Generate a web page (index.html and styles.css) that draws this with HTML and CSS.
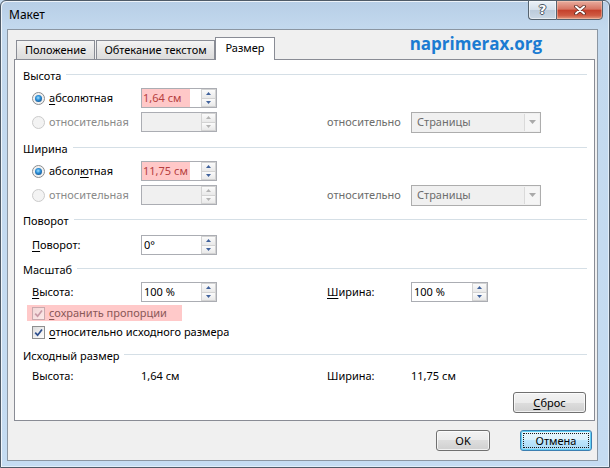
FILE: index.html
```html
<!DOCTYPE html>
<html lang="ru">
<head>
<meta charset="utf-8">
<title>Макет</title>
<link rel="stylesheet" href="styles.css">
</head>
<body>
<div class="window">
  <div class="titlebar">
    <span class="title">Макет</span>
    <div class="caption">
      <span class="cap-btn help">?</span>
      <span class="cap-btn close">
        <svg width="12" height="10" viewBox="0 0 12 10"><path d="M2 1.5 L10 8.5 M10 1.5 L2 8.5" stroke="#5a2a22" stroke-width="3.6" stroke-linecap="round" fill="none"/><path d="M2 1.5 L10 8.5 M10 1.5 L2 8.5" stroke="#ffffff" stroke-width="2" stroke-linecap="round" fill="none"/></svg>
      </span>
    </div>
  </div>

  <div class="client">
    <div class="tabs">
      <div class="tab tab-1">Положение</div>
      <div class="tab tab-2">Обтекание текстом</div>
      <div class="tab active">Размер</div>
      <div class="brand">naprimerax.org</div>
    </div>

    <div class="panel">
      <div class="group-head first"><span>Высота</span><i class="rule"></i></div>
      <div class="row mt2">
        <div class="opt"><span class="radio"><span class="dot"></span></span><span><u>а</u>бсолютная</span></div>
        <div class="spin">
          <span class="val"><span class="hl">1,64 см</span></span>
          <span class="arrows"><span class="up"><svg width="5" height="3" viewBox="0 0 5 3"><path d="M0 3 L2.5 0 L5 3Z" fill="#40629c"/></svg></span><span class="dn"><svg width="5" height="3" viewBox="0 0 5 3"><path d="M0 0 L2.5 3 L5 0Z" fill="#40629c"/></svg></span></span>
        </div>
      </div>
      <div class="row">
        <div class="opt disabled"><span class="radio off"></span><span>относительная</span></div>
        <div class="spin off">
          <span class="val"></span>
          <span class="arrows"><span class="up"><svg width="5" height="3" viewBox="0 0 5 3"><path d="M0 3 L2.5 0 L5 3Z" fill="#b4b4b4"/></svg></span><span class="dn"><svg width="5" height="3" viewBox="0 0 5 3"><path d="M0 0 L2.5 3 L5 0Z" fill="#b4b4b4"/></svg></span></span>
        </div>
        <span class="c4 muted">относительно</span>
        <div class="combo"><span class="txt">Страницы</span><span class="drop"><svg width="7" height="4" viewBox="0 0 7 4"><path d="M0 0 L3.5 4 L7 0Z" fill="#a9a9a9"/></svg></span></div>
      </div>

      <div class="group-head mt7"><span>Ширина</span><i class="rule"></i></div>
      <div class="row mt2">
        <div class="opt"><span class="radio"><span class="dot"></span></span><span>абсол<u>ю</u>тная</span></div>
        <div class="spin">
          <span class="val"><span class="hl">11,75 см</span></span>
          <span class="arrows"><span class="up"><svg width="5" height="3" viewBox="0 0 5 3"><path d="M0 3 L2.5 0 L5 3Z" fill="#40629c"/></svg></span><span class="dn"><svg width="5" height="3" viewBox="0 0 5 3"><path d="M0 0 L2.5 3 L5 0Z" fill="#40629c"/></svg></span></span>
        </div>
      </div>
      <div class="row">
        <div class="opt disabled"><span class="radio off"></span><span>относительная</span></div>
        <div class="spin off">
          <span class="val"></span>
          <span class="arrows"><span class="up"><svg width="5" height="3" viewBox="0 0 5 3"><path d="M0 3 L2.5 0 L5 3Z" fill="#b4b4b4"/></svg></span><span class="dn"><svg width="5" height="3" viewBox="0 0 5 3"><path d="M0 0 L2.5 3 L5 0Z" fill="#b4b4b4"/></svg></span></span>
        </div>
        <span class="c4 muted">относительно</span>
        <div class="combo"><span class="txt">Страницы</span><span class="drop"><svg width="7" height="4" viewBox="0 0 7 4"><path d="M0 0 L3.5 4 L7 0Z" fill="#a9a9a9"/></svg></span></div>
      </div>

      <div class="group-head mt6"><span>Поворот</span><i class="rule"></i></div>
      <div class="row mt4">
        <span><u>П</u>оворот:</span>
        <div class="spin">
          <span class="val plain">0°</span>
          <span class="arrows"><span class="up"><svg width="5" height="3" viewBox="0 0 5 3"><path d="M0 3 L2.5 0 L5 3Z" fill="#40629c"/></svg></span><span class="dn"><svg width="5" height="3" viewBox="0 0 5 3"><path d="M0 0 L2.5 3 L5 0Z" fill="#40629c"/></svg></span></span>
        </div>
      </div>

      <div class="group-head mt5"><span>Масштаб</span><i class="rule"></i></div>
      <div class="row mt2">
        <span><u>В</u>ысота:</span>
        <div class="spin">
          <span class="val plain">100 %</span>
          <span class="arrows"><span class="up"><svg width="5" height="3" viewBox="0 0 5 3"><path d="M0 3 L2.5 0 L5 3Z" fill="#40629c"/></svg></span><span class="dn"><svg width="5" height="3" viewBox="0 0 5 3"><path d="M0 0 L2.5 3 L5 0Z" fill="#40629c"/></svg></span></span>
        </div>
        <span class="c4"><u>Ш</u>ирина:</span>
        <div class="spin wide">
          <span class="val plain">100 %</span>
          <span class="arrows"><span class="up"><svg width="5" height="3" viewBox="0 0 5 3"><path d="M0 3 L2.5 0 L5 3Z" fill="#40629c"/></svg></span><span class="dn"><svg width="5" height="3" viewBox="0 0 5 3"><path d="M0 0 L2.5 3 L5 0Z" fill="#40629c"/></svg></span></span>
        </div>
      </div>
      <div class="check-row">
        <div class="chk marked">
          <span class="box soft"><svg width="9" height="9" viewBox="0 0 9 9"><path d="M1.2 4.6 L3.6 7.2 L8 1.4" stroke="#c99aa6" stroke-width="1.7" fill="none"/></svg></span>
          <span><u>с</u>охранить пропорции</span>
        </div>
      </div>
      <div class="check-row mt1">
        <div class="chk">
          <span class="box"><svg width="9" height="9" viewBox="0 0 9 9"><path d="M1.2 4.6 L3.6 7.2 L8 1.4" stroke="#2d4f8e" stroke-width="1.7" fill="none"/></svg></span>
          <span><u>о</u>тносительно исходного размера</span>
        </div>
      </div>

      <div class="group-head mt7"><span>Исходный размер</span><i class="rule"></i></div>
      <div class="row info mt4">
        <span>Высота:</span>
        <span>1,64 см</span>
        <span class="c4">Ширина:</span>
        <span>11,75 см</span>
      </div>

      <div class="reset-row">
        <button class="btn reset"><span class="face"><u>С</u>брос</span></button>
      </div>
    </div>

    <div class="actions">
      <button class="btn ok"><span class="face">OK</span></button>
      <button class="btn cancel default"><span class="face">Отмена</span></button>
    </div>
  </div>
</div>
</body>
</html>
```
FILE: styles.css
```css
html, body {
  margin: 0;
  padding: 0;
}
body {
  width: 610px;
  height: 468px;
  overflow: hidden;
  background: #c6dcf1;
  font-family: "Noto Sans", "Liberation Sans", sans-serif;
  font-size: 11px;
  line-height: 16px;
  color: #000;
}
u {
  text-decoration: underline;
  text-underline-offset: 2px;
}

.window {
  box-sizing: border-box;
  width: 610px;
  height: 468px;
  border: 1px solid #4f5b68;
  border-radius: 6px 6px 0 0;
  background: linear-gradient(180deg, #b7cee6 0, #c3d9ee 28px, #c5dcf2 100%);
  box-shadow: inset 1px 1px 0 rgba(255,255,255,0.75), inset -1px -1px 0 rgba(255,255,255,0.5);
  display: flex;
  flex-direction: column;
}

/* title bar */
.titlebar {
  height: 28px;
  display: flex;
  align-items: flex-start;
}
.title {
  padding: 6px 0 0 8px;
  font-size: 12px;
  line-height: 16px;
  color: #000;
}
.caption {
  margin-left: auto;
  margin-right: 6px;
  margin-top: -1px;
  display: flex;
}
.cap-btn {
  box-sizing: border-box;
  height: 20px;
  border: 1px solid #56636f;
  display: flex;
  align-items: center;
  justify-content: center;
}
.help {
  width: 28px;
  border-right: 0;
  border-radius: 0 0 0 4px;
  background: linear-gradient(180deg, #eaf1f8 0, #d5e0eb 48%, #bccbdb 52%, #cbd8e5 100%);
  box-shadow: inset 0 0 0 1px rgba(255,255,255,0.5);
  color: #fff;
  font-family: "DejaVu Sans", sans-serif;
  font-weight: 700;
  font-size: 13px;
  text-shadow: 1px 0 0 #4a5563, -1px 0 0 #4a5563, 0 1px 0 #4a5563, 0 -1px 0 #4a5563;
}
.close {
  width: 47px;
  border-radius: 0 0 4px 0;
  background: linear-gradient(180deg, #e9ad9f 0, #d77563 45%, #c5412c 52%, #cf5a42 80%, #e49a80 100%);
  box-shadow: inset 0 0 0 1px rgba(255,220,200,0.4);
}

/* client area */
.client {
  flex: 1;
  margin: 0 11px 6px 6px;
  border: 1px solid #8b96a2;
  background: #f0f0f0;
  padding: 7px 2px 0 6px;
  display: flex;
  flex-direction: column;
}

.tabs {
  display: flex;
  align-items: flex-end;
  height: 22px;
}
.tab {
  box-sizing: border-box;
  height: 19px;
  border: 1px solid #898c95;
  border-bottom: 0;
  background: linear-gradient(180deg, #f4f4f4 0, #e7e7e7 50%, #dcdcdc 100%);
  display: flex;
  align-items: center;
  justify-content: center;
}
.tab-1 {
  width: 79px;
  margin-left: 2px;
  margin-right: 1px;
}
.tab-2 {
  width: 119px;
}
.tab.active {
  width: 60px;
  height: 23px;
  background: #fff;
  position: relative;
  z-index: 1;
  margin-bottom: -1px;
  padding-bottom: 2px;
}
.brand {
  margin-left: auto;
  margin-right: 53px;
  align-self: flex-start;
  margin-top: -3px;
  font-family: "Open Sans", "Noto Sans", sans-serif;
  font-weight: 700;
  font-size: 17px;
  line-height: 20px;
  color: #1b7bd2;
}

.panel {
  box-sizing: border-box;
  height: 362px;
  border: 1px solid #898c95;
  background: #fff;
}

.group-head {
  display: flex;
  align-items: center;
  height: 16px;
  padding: 0 7px 0 8px;
}
.group-head.first { margin-top: 8px; }
.rule {
  flex: 1;
  height: 1px;
  background: #d5dfe6;
  margin-left: 5px;
  align-self: flex-start;
  margin-top: 6px;
}

.mt1 { margin-top: 1px; }
.mt2 { margin-top: 2px; }
.mt4 { margin-top: 4px; }
.mt5 { margin-top: 5px; }
.mt6 { margin-top: 6px; }
.mt7 { margin-top: 7px; }

.row {
  display: grid;
  grid-template-columns: 109px 76px 110px 84px 130px;
  align-items: center;
  height: 24px;
  padding-left: 17px;
}
.row.info {
  height: 16px;
}
.c4 { grid-column: 4; }
.muted { color: #6d6d6d; }

.opt {
  display: flex;
  align-items: center;
  gap: 4px;
}
.opt.disabled { color: #8a8a8a; }

.radio {
  box-sizing: border-box;
  width: 13px;
  height: 13px;
  border-radius: 50%;
  border: 1px solid #8a8c8e;
  background: radial-gradient(circle at 50% 50%, #dedede 0, #f6f6f6 75%);
  display: flex;
  align-items: center;
  justify-content: center;
}
.radio .dot {
  width: 7px;
  height: 7px;
  border-radius: 50%;
  background: radial-gradient(circle at 45% 40%, #9fe0ff 0, #2c8fd8 40%, #0d3c70 100%);
}
.radio.off {
  border-color: #cbcbcb;
  background: #f3f3f3;
}

.spin {
  box-sizing: border-box;
  width: 76px;
  height: 20px;
  border: 1px solid #abadb3;
  background: #fff;
  display: flex;
}
.spin.wide { width: 77px; }
.spin .val {
  flex: 1;
  display: flex;
  align-items: center;
}
.spin .val.plain { padding-left: 2px; }
.spin.off .val { background: #f0f0f0; }
.hl {
  align-self: stretch;
  box-sizing: border-box;
  width: 48px;
  padding-left: 1px;
  background: #ffc8c8;
  color: #b63e3e;
  display: flex;
  align-items: center;
  white-space: nowrap;
}
.arrows {
  width: 15px;
  display: flex;
  flex-direction: column;
}
.arrows .up, .arrows .dn {
  flex: 1;
  box-sizing: border-box;
  border: 1px solid #d3d3d3;
  background: linear-gradient(180deg, #fbfbfb, #e9e9e9);
  display: flex;
  align-items: center;
  justify-content: center;
}
.arrows .dn { border-top: 0; }

.combo {
  box-sizing: border-box;
  width: 130px;
  height: 21px;
  border: 1px solid #adadad;
  background: #f0f0f0;
  display: flex;
  color: #6d6d6d;
}
.combo .txt {
  flex: 1;
  padding-left: 5px;
  display: flex;
  align-items: center;
}
.combo .drop {
  width: 14px;
  margin: 1px;
  border-left: 1px solid #dadada;
  background: #f5f5f5;
  display: flex;
  align-items: center;
  justify-content: center;
}

.check-row {
  display: flex;
  align-items: center;
  height: 18px;
  margin-left: 12px;
}
.chk {
  display: flex;
  align-items: center;
  gap: 4px;
  height: 16px;
  padding: 0 14px 0 5px;
  white-space: nowrap;
}
.chk.marked {
  box-sizing: border-box;
  width: 155px;
  padding-right: 0;
  background: #ffc9c9;
  color: #8a5858;
}
.box {
  box-sizing: border-box;
  width: 13px;
  height: 13px;
  border: 1px solid #8e8f8f;
  background: linear-gradient(135deg, #dcdcdc 0, #ffffff 100%);
  display: flex;
  align-items: center;
  justify-content: center;
}
.box.soft {
  border-color: #c9a9ad;
  background: linear-gradient(135deg, #f1d6d6 0, #fde9e9 100%);
}

.reset-row {
  display: flex;
  justify-content: flex-end;
  margin-top: 8px;
  padding-right: 8px;
}

.btn {
  box-sizing: border-box;
  height: 21px;
  padding: 2px;
  margin: 0;
  border: 1px solid #707070;
  border-radius: 3px;
  background: linear-gradient(180deg, #f3f3f3 0, #ebebeb 50%, #dddddd 50%, #d0d0d0 100%);
  box-shadow: inset 0 0 0 1px rgba(255,255,255,0.7);
  font-family: "Noto Sans", "Liberation Sans", sans-serif;
  font-size: 11px;
  line-height: 14px;
  color: #000;
  display: flex;
}
.btn .face {
  flex: 1;
  box-sizing: border-box;
  border: 1px solid transparent;
  display: flex;
  align-items: center;
  justify-content: center;
}
.reset { width: 73px; }
.ok { width: 54px; }
.cancel { width: 72px; }
.btn.default {
  border-color: #3c7fb1;
  box-shadow: inset 0 0 0 1px #63d0f5;
  background: linear-gradient(180deg, #eaf6fd 0, #d9f0fc 50%, #bee6fd 50%, #a7d9f5 100%);
}
.btn.default .face {
  border: 1px dotted #1a1a1a;
}

.actions {
  display: flex;
  justify-content: flex-end;
  gap: 30px;
  margin-top: 9px;
  margin-right: 3px;
}
```
